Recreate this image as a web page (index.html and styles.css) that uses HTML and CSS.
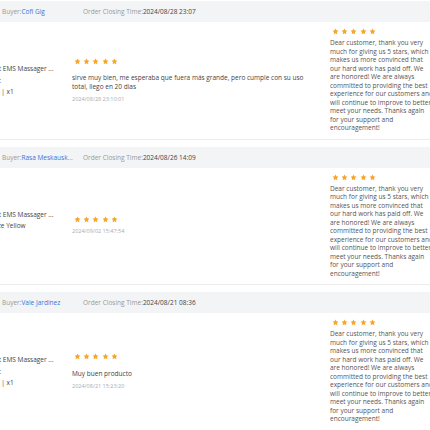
FILE: index.html
```html
<!DOCTYPE html>
<html lang="en">
<head>
    <meta charset="UTF-8">
    <meta name="viewport" content="width=device-width, initial-scale=1.0">
    <title>Reviews</title>
    <link rel="stylesheet" href="styles.css">
</head>
<body>
    <svg class="defs" width="0" height="0">
        <symbol id="star" viewBox="0 0 24 24">
            <path d="M12 1.5l3.1 6.5 7.1 1-5.1 5 1.2 7.1L12 17.8l-6.3 3.3 1.2-7.1-5.1-5 7.1-1z"/>
        </symbol>
    </svg>

    <div class="orders">
        <!-- order 1 -->
        <div class="order">
            <div class="order-head">
                <span class="buyer">Buyer:<a href="#">Cofi Gig</a></span>
                <span class="closing">Order Closing Time:<b>2024/08/28 23:07</b></span>
            </div>
            <div class="order-body">
                <div class="product">
                    <div class="thumb"></div>
                    <div class="product-info">
                        <p>Smart EMS Massager ...</p>
                        <p>Color:</p>
                        <p>$7.99 | x1</p>
                    </div>
                </div>
                <div class="review">
                    <div class="stars"><svg><use href="#star"/></svg><svg><use href="#star"/></svg><svg><use href="#star"/></svg><svg><use href="#star"/></svg><svg><use href="#star"/></svg></div>
                    <p class="review-text">sirve muy bien, me esperaba que fuera más grande, pero cumple con su uso total, llego en 20 dias</p>
                    <p class="review-time">2024/08/28 23:10:01</p>
                </div>
                <div class="reply">
                    <div class="stars"><svg><use href="#star"/></svg><svg><use href="#star"/></svg><svg><use href="#star"/></svg><svg><use href="#star"/></svg><svg><use href="#star"/></svg></div>
                    <p>Dear customer, thank you very much for giving us 5 stars, which makes us more convinced that our hard work has paid off. We are honored! We are always committed to providing the best experience for our customers and will continue to improve to better meet your needs. Thanks again for your support and encouragement!</p>
                </div>
            </div>
        </div>

        <!-- order 2 -->
        <div class="order">
            <div class="order-head">
                <span class="buyer">Buyer:<a href="#">Rasa Meskauskienė</a></span>
                <span class="closing">Order Closing Time:<b>2024/08/26 14:09</b></span>
            </div>
            <div class="order-body">
                <div class="product">
                    <div class="thumb"></div>
                    <div class="product-info">
                        <p>Smart EMS Massager ...</p>
                        <p>Bronze Yellow</p>
                        <p>$8</p>
                    </div>
                </div>
                <div class="review">
                    <div class="stars"><svg><use href="#star"/></svg><svg><use href="#star"/></svg><svg><use href="#star"/></svg><svg><use href="#star"/></svg><svg><use href="#star"/></svg></div>
                    <p class="review-time">2024/09/02 15:47:54</p>
                </div>
                <div class="reply">
                    <div class="stars"><svg><use href="#star"/></svg><svg><use href="#star"/></svg><svg><use href="#star"/></svg><svg><use href="#star"/></svg><svg><use href="#star"/></svg></div>
                    <p>Dear customer, thank you very much for giving us 5 stars, which makes us more convinced that our hard work has paid off. We are honored! We are always committed to providing the best experience for our customers and will continue to improve to better meet your needs. Thanks again for your support and encouragement!</p>
                </div>
            </div>
        </div>

        <!-- order 3 -->
        <div class="order">
            <div class="order-head">
                <span class="buyer">Buyer:<a href="#">Vale Jardinez</a></span>
                <span class="closing">Order Closing Time:<b>2024/08/21 08:36</b></span>
            </div>
            <div class="order-body">
                <div class="product">
                    <div class="thumb"></div>
                    <div class="product-info">
                        <p>Smart EMS Massager ...</p>
                        <p>Color:</p>
                        <p>$7.99 | x1</p>
                    </div>
                </div>
                <div class="review">
                    <div class="stars"><svg><use href="#star"/></svg><svg><use href="#star"/></svg><svg><use href="#star"/></svg><svg><use href="#star"/></svg><svg><use href="#star"/></svg></div>
                    <p class="review-text">Muy buen producto</p>
                    <p class="review-time">2024/08/21 15:23:20</p>
                </div>
                <div class="reply">
                    <div class="stars"><svg><use href="#star"/></svg><svg><use href="#star"/></svg><svg><use href="#star"/></svg><svg><use href="#star"/></svg><svg><use href="#star"/></svg></div>
                    <p>Dear customer, thank you very much for giving us 5 stars, which makes us more convinced that our hard work has paid off. We are honored! We are always committed to providing the best experience for our customers and will continue to improve to better meet your needs. Thanks again for your support and encouragement!</p>
                </div>
            </div>
        </div>
    </div>
</body>
</html>
```

FILE: styles.css
```css
html, body {
    overflow: hidden;
}
body {
    font-family: 'Open Sans', 'Noto Sans', sans-serif;
    font-size: 6.5px;
    margin: 0;
    padding: 1px 0 0;
    background-color: #ffffff;
    color: #444;
}
p {
    margin: 0;
}
.defs {
    position: absolute;
}
.orders {
    width: 560px;
    margin-left: -80px; /* list is scrolled sideways */
}
.order {
    margin-bottom: 7px;
}
.order-head {
    display: flex;
    height: 21px;
    line-height: 21px;
    padding-left: 82px;
    background-color: #f3f4f6;
    color: #999;
    white-space: nowrap;
}
.buyer {
    width: 72px;
    margin-right: 9px;
    overflow: hidden;
    text-overflow: ellipsis;
}
.buyer a {
    color: #3576dd;
    text-decoration: none;
}
.closing b {
    font-weight: normal;
    color: #444;
}
.order-body {
    display: grid;
    grid-template-columns: 152px 258px 104px;
    padding: 6px 0;
    border-bottom: 1px solid #ececec;
}
.product {
    display: flex;
    align-items: center;
    gap: 13px;
    padding-right: 10px;
}
.thumb {
    width: 50px;
    height: 50px;
    flex-shrink: 0;
    background-color: #f0f0f0;
}
.product-info {
    line-height: 11.5px;
    color: #444;
    white-space: nowrap;
}
.review {
    display: flex;
    flex-direction: column;
    justify-content: center;
    padding-right: 10px;
}
.stars {
    display: flex;
    gap: 2.2px;
    height: 7px;
    padding-left: 2px;
}
.stars svg {
    width: 7px;
    height: 7px;
    fill: #f8a62a;
}
.review-text {
    margin-top: 8.5px;
    line-height: 9px;
    color: #444;
}
.review-time {
    margin-top: 4px;
    font-size: 5.5px;
    line-height: 8px;
    color: #aaa;
}
.reply .stars {
    margin-bottom: 4px;
}
.reply p {
    line-height: 8.5px;
    color: #555;
}
```
